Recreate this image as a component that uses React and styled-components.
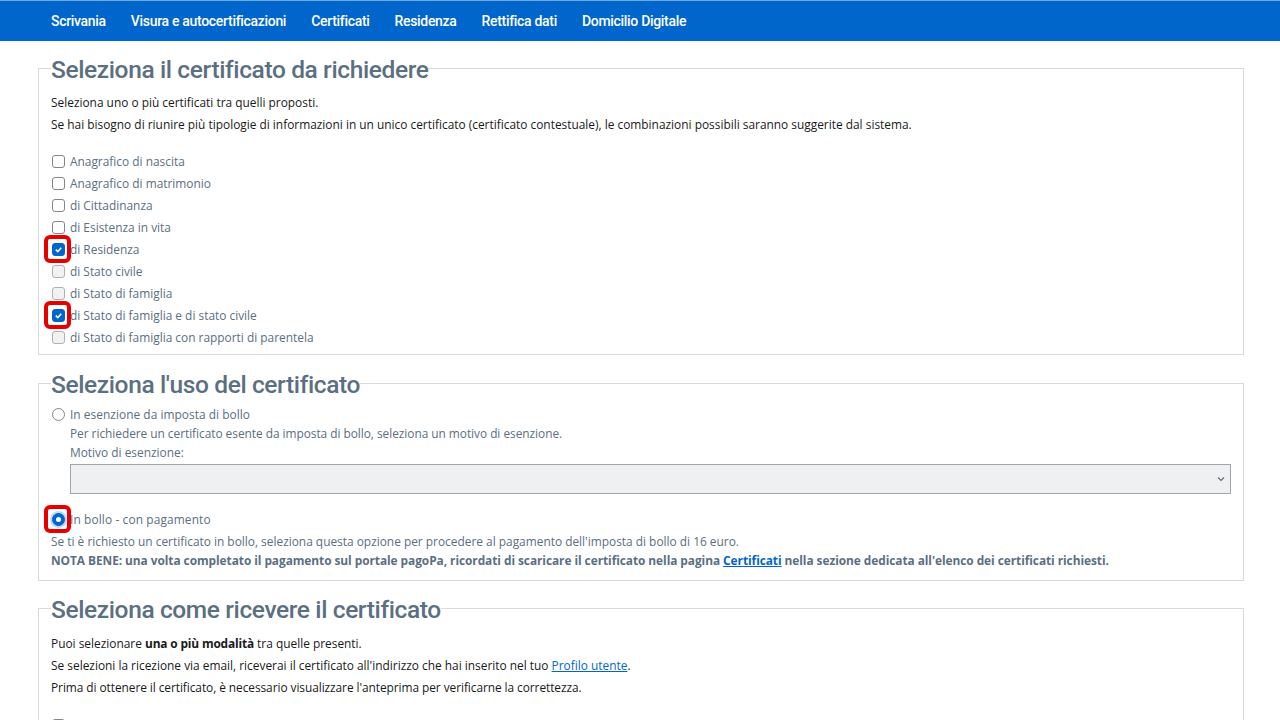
import React from 'react';
import styled, { createGlobalStyle } from 'styled-components';

const Global = createGlobalStyle`
  html, body { margin: 0; padding: 0; background: #fff; height: 720px; overflow: hidden; }
  body { font-family: "Open Sans", "Noto Sans", sans-serif; font-size: 11.9px; color: #19191a; }
  * { box-sizing: border-box; }
`;
const Page = styled.div`width: 1280px; height: 720px; overflow: hidden;`;
const NavBar = styled.nav`
  height: 41px; background: #0066cc; border-top: 1px solid #6fa8dc;
  display: flex; align-items: center; gap: 25px; padding: 0 0 0 51px;
`;
const NavItem = styled.a`
  color: #fff; font: 500 14px/1 Roboto, sans-serif; letter-spacing: -0.31px; white-space: nowrap;
`;
const Main = styled.main`
  padding: 0 36px 0 38px; display: flex; flex-direction: column; margin-top: 9px;
`;
const Field = styled.fieldset`
  margin: 0 0 ${p => p.$after || 0}px; min-width: 0; border: 1px solid #d9dadb; padding: 0 12px 0 12px; height: ${p => p.$h}px; flex: none;
`;
const Legend = styled.legend`
  padding: 4px 0 0; font: 500 24.5px/32px Roboto, sans-serif; color: #5b6f82; white-space: nowrap; letter-spacing: -0.38px;
`;
const Para = styled.p`
  margin: 0; line-height: ${p => p.$tight ? 19 : 22}px; color: ${p => p.$muted ? '#5b6f82' : '#19191a'}; font-weight: ${p => p.$strong ? 700 : 400};
  padding-left: ${p => p.$indent ? 19 : 0}px; white-space: nowrap; letter-spacing: ${p => p.$ls || 0}px;
`;
const Intro = styled.div`padding-top: ${p => p.$top}px;`;
const List = styled.div`margin-top: ${p => p.$top}px;`;
const Option = styled.label`
  display: flex; align-items: center; height: ${p => p.$h || 22}px; color: #5b6f82; position: relative; white-space: nowrap;
  letter-spacing: ${p => p.$ls || 0}px;
`;
const Box = styled.span`
  position: relative; flex: none; width: 13px; height: 13px; margin: 0 5.5px 0 0.5px;
  border: 1px solid #858585; background: #fff; color: #fff;
  border-radius: ${p => p.$round ? '50%' : '3px'};
  display: flex; align-items: center; justify-content: center;
  ${p => p.$on && 'background: #0066cc; border-color: #0066cc;'}
  ${p => p.$faded && 'border-color: #b0b0b0; background: #f2f2f3;'}
`;
const Dot = styled.span`
  position: relative; width: 5px; height: 5px; border-radius: 50%; background: #fff;
`;
const Halo = styled.span`
  position: absolute; inset: -3px; border-radius: 50%; background: rgba(0,102,204,.25);
`;
const Mark = styled.span`
  position: absolute; left: -9px; top: -9px; width: 27px; height: 28px;
  border: 4px solid #e60000; border-radius: 6px; pointer-events: none;
`;
const Select = styled.div`
  height: 30px; margin: 2px 0 14px 19px; width: 1161px; background: #eff0f2; border: 1px solid #a3a5a8;
  display: flex; align-items: center; justify-content: flex-end; padding-right: 4px; color: #5b6f82;
`;
const Notes = styled.div`margin-top: 2px;`;
const TopSpace = styled.div`padding-top: 3px;`;
const Link = styled.a`color: #0066cc; text-decoration: underline;`;
const Emph = styled.b`letter-spacing: -0.15px;`;

const certs = [
  ['Anagrafico di nascita'],
  ['Anagrafico di matrimonio'],
  ['di Cittadinanza'],
  ['di Esistenza in vita'],
  ['di Residenza', 'on'],
  ['di Stato civile', 'faded'],
  ['di Stato di famiglia', 'faded'],
  ['di Stato di famiglia e di stato civile', 'on'],
  ['di Stato di famiglia con rapporti di parentela', 'faded'],
];

const Check = () => (
  <svg width="9" height="9" viewBox="0 0 10 10"><path d="M2 5.2l2.2 2.2L8 3" fill="none" stroke="#fff" strokeWidth="1.8" /></svg>
);

export default function App() {
  return (
    <Page>
      <Global />
      <NavBar>
        {['Scrivania', 'Visura e autocertificazioni', 'Certificati', 'Residenza', 'Rettifica dati', 'Domicilio Digitale'].map(t => <NavItem key={t}>{t}</NavItem>)}
      </NavBar>
      <Main>
        <Field $h={305} $after={10}>
          <Legend>Seleziona il certificato da richiedere</Legend>
          <Intro $top={5}>
            <Para>Seleziona uno o più certificati tra quelli proposti.</Para>
            <Para>Se hai bisogno di riunire più tipologie di informazioni in un unico certificato (certificato contestuale), le combinazioni possibili saranno suggerite dal sistema.</Para>
          </Intro>
          <List $top={15}>
            {certs.map(([t, s]) => (
              <Option key={t}>
                <Box $on={s === 'on'} $faded={s === 'faded'}>
                  {s === 'on' && <Check />}
                  {s === 'on' && <Mark />}
                </Box>
                {t}
              </Option>
            ))}
          </List>
        </Field>
        <Field $h={216} $after={9}>
          <Legend>Seleziona l'uso del certificato</Legend>
          <TopSpace>
            <Option $h={20} $ls={0.04}><Box $round />In esenzione da imposta di bollo</Option>
          </TopSpace>
          <Para $muted $indent $tight $ls={-0.04}>Per richiedere un certificato esente da imposta di bollo, seleziona un motivo di esenzione.</Para>
          <Para $muted $indent $tight>Motivo di esenzione:</Para>
          <Select>
            <svg width="10" height="10" viewBox="0 0 10 10"><path d="M2 3.5l3 3 3-3" fill="none" stroke="#5b6f82" strokeWidth="1.2" /></svg>
          </Select>
          <Option $ls={0.12}>
            <Box $round $on><Halo /><Dot /><Mark /></Box>
            In bollo - con pagamento
          </Option>
          <Notes>
            <Para $muted $tight>Se ti è richiesto un certificato in bollo, seleziona questa opzione per procedere al pagamento dell'imposta di bollo di 16 euro.</Para>
            <Para $muted $strong $tight $ls={-0.06}>NOTA BENE: una volta completato il pagamento sul portale pagoPa, ricordati di scaricare il certificato nella pagina <Link>Certificati</Link> nella sezione dedicata all'elenco dei certificati richiesti.</Para>
          </Notes>
        </Field>
        <Field $h={202}>
          <Legend>Seleziona come ricevere il certificato</Legend>
          <Intro $top={6}>
            <Para>Puoi selezionare <Emph>una o più modalità</Emph> tra quelle presenti.</Para>
            <Para>Se selezioni la ricezione via email, riceverai il certificato all'indirizzo che hai inserito nel tuo <Link>Profilo utente</Link>.</Para>
            <Para $ls={-0.065}>Prima di ottenere il certificato, è necessario visualizzare l'anteprima per verificarne la correttezza.</Para>
          </Intro>
          <List $top={16}>
            <Option><Box />Ricezione tramite email</Option>
          </List>
        </Field>
      </Main>
    </Page>
  );
}
